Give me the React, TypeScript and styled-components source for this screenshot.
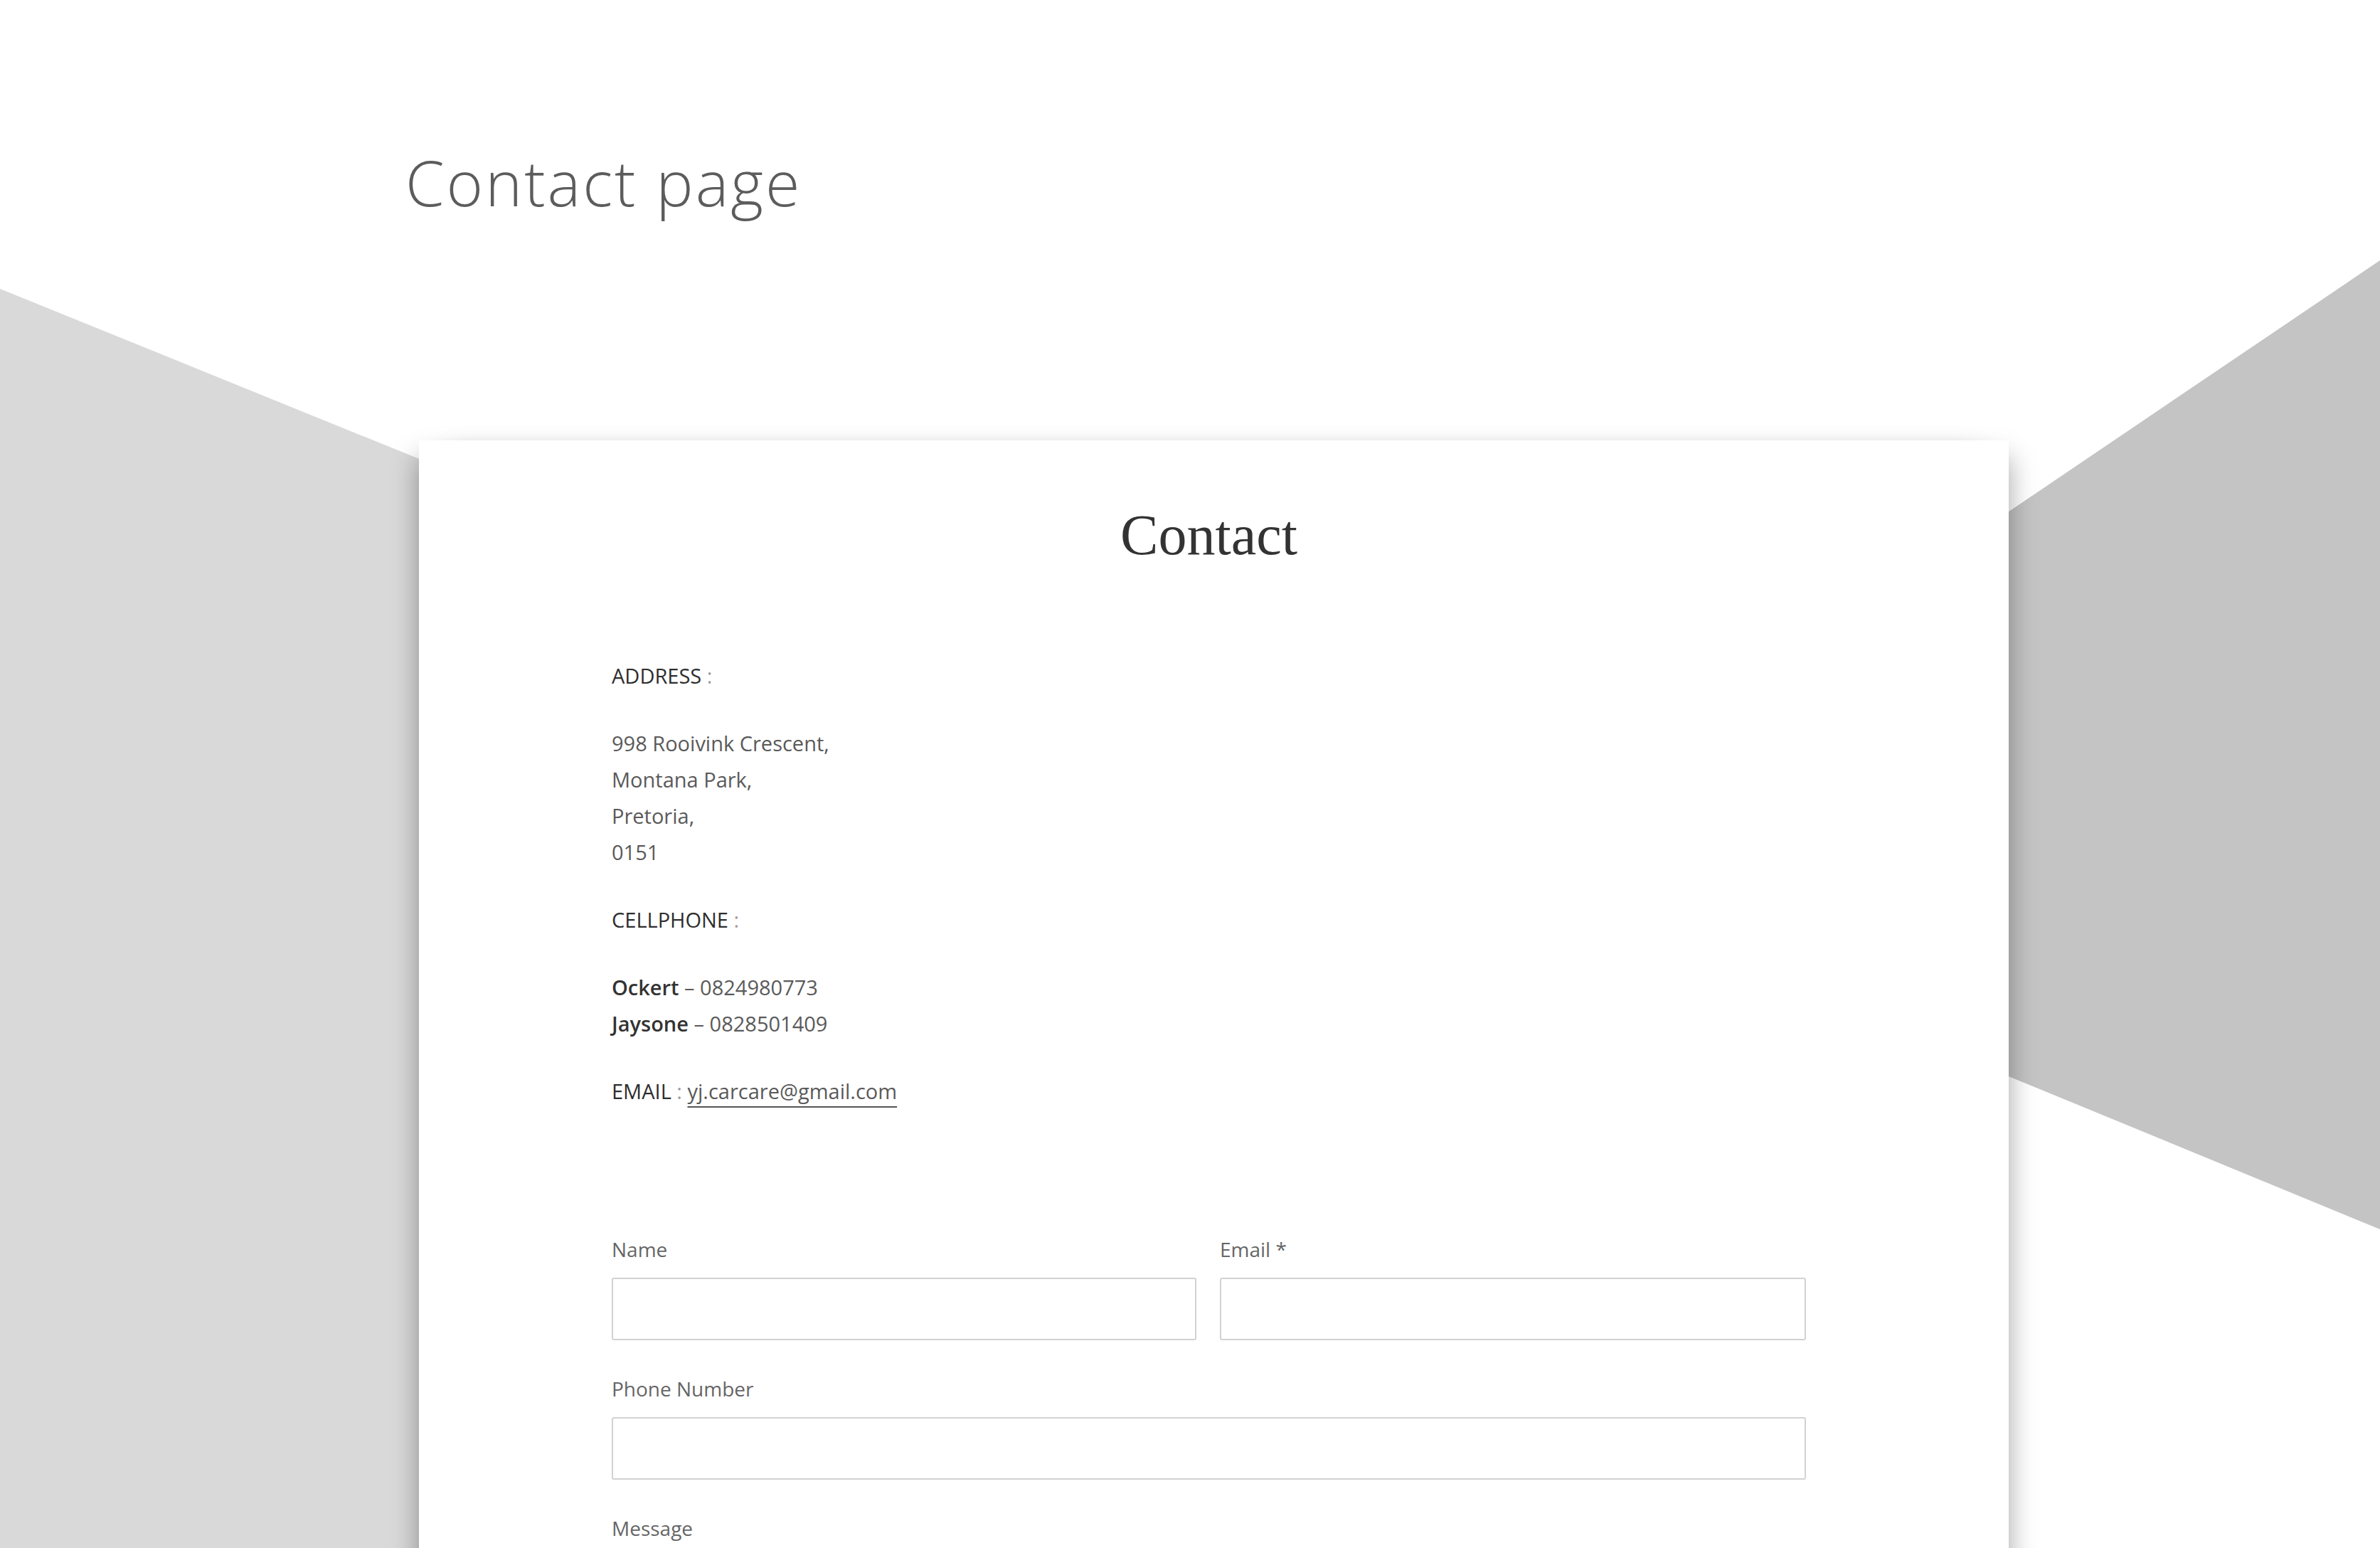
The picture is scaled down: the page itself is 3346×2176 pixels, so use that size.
import React from "react";
import styled, { createGlobalStyle } from "styled-components";

const Global = createGlobalStyle`
  html, body { margin: 0; padding: 0; background: #ffffff; }
  body { font-family: "Open Sans", "Liberation Sans", sans-serif; overflow: hidden; }
  * { box-sizing: border-box; }
`;

const Page = styled.div`
  position: relative;
  width: 3346px;
  height: 2176px;
  overflow: hidden;
  background: #ffffff;
`;

const Backdrop = styled.svg`
  position: absolute;
  inset: 0;
  width: 3346px;
  height: 2176px;
  z-index: 0;
`;

const Content = styled.div`
  position: relative;
  z-index: 1;
  display: flex;
  flex-direction: column;
`;

const Header = styled.header`
  padding: 212px 0 0 570px;
  height: 619px;
`;

const PageTitle = styled.h1`
  margin: 0;
  font-family: "Open Sans", sans-serif;
  font-weight: 300;
  font-size: 88px;
  line-height: 88px;
  letter-spacing: 3px;
  color: #5c5c5c;
`;

const Card = styled.main`
  margin-left: 589px;
  width: 2235px;
  min-height: 1700px;
  background: #ffffff;
  box-shadow: -24px 0 36px -24px rgba(0, 0, 0, 0.36),
    24px 0 36px -24px rgba(0, 0, 0, 0.36);
  padding: 92px 285px 0 271px;
`;

const Column = styled.div`
  display: flex;
  flex-direction: column;
`;

const CardTitle = styled.h2`
  margin: 0 0 131px;
  font-family: "Liberation Serif", "Times New Roman", serif;
  font-weight: 400;
  font-size: 80px;
  line-height: 82px;
  text-align: center;
  color: #333333;
`;

const Info = styled.div`
  display: flex;
  flex-direction: column;
  gap: 44px;
  font-size: 29px;
  line-height: 51px;
  color: #5a5a5a;
`;

const Para = styled.p`
  margin: 0;
`;

const Label = styled.span`
  color: #2e2e2e;
`;

const Sep = styled.span`
  color: #9a9a9a;
`;

const Name = styled.span`
  font-weight: 600;
  color: #333333;
`;

const Mail = styled.a`
  color: #5a5a5a;
  text-decoration: underline;
  text-decoration-thickness: 2px;
  text-underline-offset: 10px;
  text-decoration-color: #555555;
`;

const Form = styled.form`
  margin-top: 177px;
  display: flex;
  flex-direction: column;
  gap: 48px;
`;

const Row = styled.div`
  display: grid;
  grid-template-columns: 822px 1fr;
  gap: 33px;
`;

const Field = styled.label`
  display: flex;
  flex-direction: column;
  gap: 20px;
`;

const FieldLabel = styled.span`
  font-size: 28px;
  line-height: 40px;
  color: #666666;
`;

const Input = styled.input`
  height: 88px;
  width: 100%;
  border: 2px solid #d2d2d2;
  border-radius: 3px;
  background: #ffffff;
  font-family: inherit;
  font-size: 28px;
  padding: 0 18px;
  outline: none;
`;

const TextArea = styled.textarea`
  height: 240px;
  width: 100%;
  border: 2px solid #d2d2d2;
  border-radius: 3px;
  background: #ffffff;
  font-family: inherit;
  font-size: 28px;
  padding: 18px;
  resize: none;
  outline: none;
`;

export default function App() {
  return (
    <>
      <Global />
      <Page>
        <Backdrop viewBox="0 0 3346 2176" aria-hidden="true">
          <polygon points="0,406 700,690 700,2176 0,2176" fill="#d9d9d9" />
          <polygon points="2700,803 3346,366 3346,1728 2700,1462" fill="#c4c4c4" />
        </Backdrop>
        <Content>
          <Header>
            <PageTitle>Contact page</PageTitle>
          </Header>
          <Card>
            <Column>
              <CardTitle>Contact</CardTitle>
              <Info>
                <Para>
                  <Label>ADDRESS</Label> <Sep>:</Sep>
                </Para>
                <Para>
                  998 Rooivink Crescent,
                  <br />
                  Montana Park,
                  <br />
                  Pretoria,
                  <br />
                  0151
                </Para>
                <Para>
                  <Label>CELLPHONE</Label> <Sep>:</Sep>
                </Para>
                <Para>
                  <Name>Ockert</Name> – 0824980773
                  <br />
                  <Name>Jaysone</Name> – 0828501409
                </Para>
                <Para>
                  <Label>EMAIL</Label> <Sep>:</Sep>{" "}
                  <Mail href="#">yj.carcare@gmail.com</Mail>
                </Para>
              </Info>
              <Form onSubmit={(e) => e.preventDefault()}>
                <Row>
                  <Field>
                    <FieldLabel>Name</FieldLabel>
                    <Input type="text" />
                  </Field>
                  <Field>
                    <FieldLabel>Email *</FieldLabel>
                    <Input type="email" />
                  </Field>
                </Row>
                <Field>
                  <FieldLabel>Phone Number</FieldLabel>
                  <Input type="tel" />
                </Field>
                <Field>
                  <FieldLabel>Message</FieldLabel>
                  <TextArea />
                </Field>
              </Form>
            </Column>
          </Card>
        </Content>
      </Page>
    </>
  );
}
